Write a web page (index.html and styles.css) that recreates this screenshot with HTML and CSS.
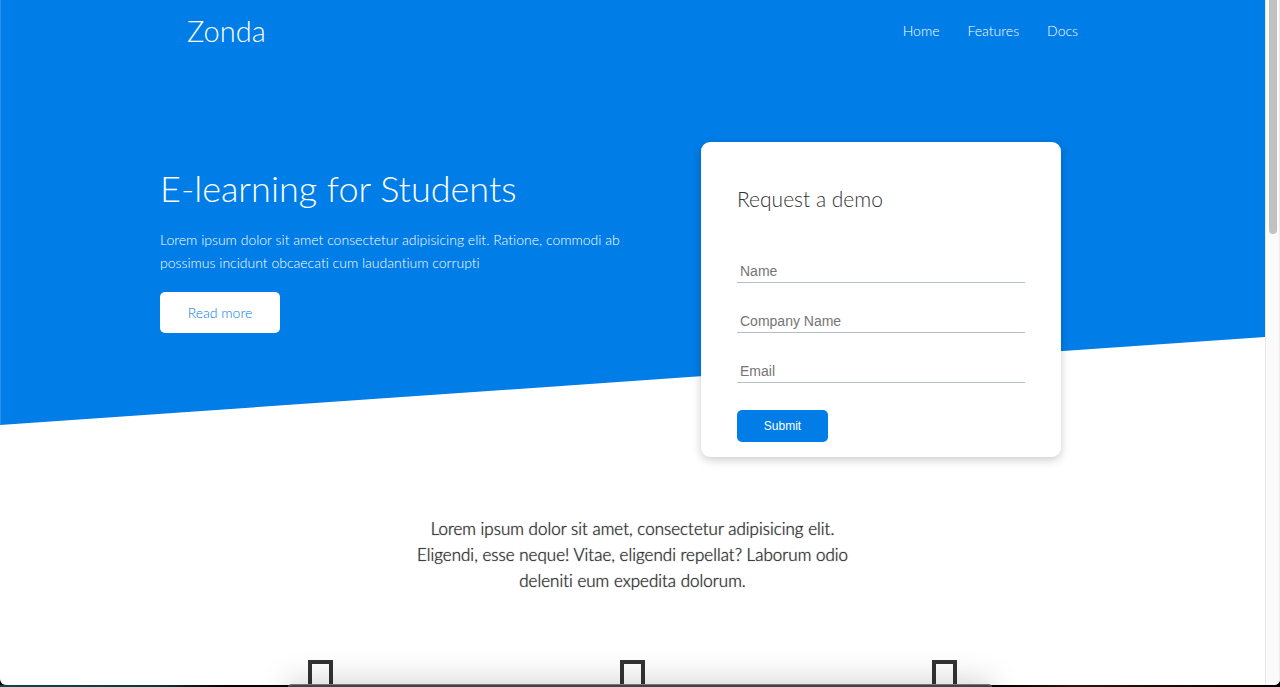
FILE: index.html
```html
<!DOCTYPE html>
<html lang="en">
<head>
  <meta charset="utf-8">
  <meta name="viewport" content="width=device-width, initial-scale=1">
  <title>Zonda</title>
  <link rel="stylesheet" href="styles.css">
</head>
<body>
  <div class="window">
    <div class="page">
      <header class="hero">
        <div class="navbar">
          <h1 class="logo">Zonda</h1>
          <nav>
            <ul class="nav-list">
              <li><a href="#">Home</a></li>
              <li><a href="#">Features</a></li>
              <li><a href="#">Docs</a></li>
            </ul>
          </nav>
        </div>
        <section class="showcase">
          <div class="showcase-text">
            <h2 class="headline">E-learning for Students</h2>
            <p class="lead">Lorem ipsum dolor sit amet consectetur adipisicing elit. Ratione, commodi ab possimus incidunt obcaecati cum laudantium corrupti</p>
            <a class="read-more" href="#">Read more</a>
          </div>
          <form class="card">
            <h2 class="card-title">Request a demo</h2>
            <input class="field" type="text" placeholder="Name" aria-label="Name">
            <input class="field" type="text" placeholder="Company Name" aria-label="Company Name">
            <input class="field" type="email" placeholder="Email" aria-label="Email">
            <button class="submit" type="submit">Submit</button>
          </form>
        </section>
      </header>
      <main class="stats">
        <h3 class="slogan">Lorem ipsum dolor sit amet, consectetur adipisicing elit. Eligendi, esse neque! Vitae, eligendi repellat? Laborum odio deleniti eum expedita dolorum.</h3>
        <div class="stats-grid">
          <span class="glyph"></span>
          <span class="glyph"></span>
          <span class="glyph"></span>
        </div>
      </main>
    </div>
    <div class="scrollbar"><div class="thumb"></div></div>
  </div>
  <div class="desktop"></div>
  <div class="dock"></div>
</body>
</html>
```
FILE: styles.css
```css
* {
  box-sizing: border-box;
  margin: 0;
  padding: 0;
}

body {
  display: flex;
  flex-direction: column;
  height: 100vh;
  overflow: hidden;
  background: #000;
  color: #333;
  font-family: Lato, sans-serif;
  font-size: 14px;
  font-weight: 300;
  font-variant-ligatures: none;
}

a {
  color: inherit;
  text-decoration: none;
}

.window {
  flex: 1;
  display: flex;
  min-height: 0;
  overflow: hidden;
  background: #fff;
  border-radius: 0 0 6px 6px;
}

.page {
  flex: 1;
  overflow: hidden;
}

/* Hero */
.hero {
  position: relative;
  color: #fff;
}

.hero::before {
  content: "";
  position: absolute;
  inset: 0 0 32px;
  background: #007de7;
  box-shadow: inset 1px 0 #2690eb;
  clip-path: polygon(0 0, 100% 0, 100% calc(100% - 88px), 0 100%);
}

.navbar {
  position: relative;
  display: flex;
  align-items: center;
  justify-content: space-between;
  max-width: 891px;
  height: 60px;
  margin: 0 auto;
}

.logo {
  font-size: 29px;
  font-weight: 300;
}

.nav-list {
  display: flex;
  gap: 28px;
  list-style: none;
}

.showcase {
  position: relative;
  display: grid;
  grid-template-columns: 1fr 448px;
  max-width: 945px;
  margin: 0 auto;
  padding-top: 82px;
}

.showcase-text {
  padding-top: 22px;
}

.headline {
  margin-bottom: 16px;
  font-size: 36px;
  font-weight: 300;
  line-height: 48px;
}

.lead {
  margin-bottom: 18px;
  line-height: 23px;
}

.read-more {
  display: inline-block;
  width: 120px;
  border-radius: 5px;
  background: #fff;
  color: #007de7;
  line-height: 41px;
  text-align: center;
}

.card {
  width: 360px;
  margin: 0 auto;
  padding: 40px 36px 15px;
  border-radius: 9px;
  background: #fff;
  box-shadow: 0 3px 10px rgba(0, 0, 0, 0.2);
  color: #333;
}

.card-title {
  margin-bottom: 44px;
  font-size: 21px;
  font-weight: 300;
  line-height: 34px;
}

.field {
  display: block;
  width: 100%;
  height: 23px;
  margin-bottom: 27px;
  padding: 0 3px;
  border: 0;
  border-bottom: 1px solid #b4becb;
  background: none;
  font-family: "Liberation Sans", Arial, sans-serif;
  font-size: 14px;
}

.field::placeholder {
  color: #757575;
}

.submit {
  display: block;
  width: 91px;
  height: 32px;
  border: 0;
  border-radius: 5px;
  background: #007de7;
  color: #fff;
  font-family: "Liberation Sans", Arial, sans-serif;
  font-size: 12px;
}

/* Stats */
.stats {
  padding-top: 59px;
}

.slogan {
  max-width: 450px;
  margin: 0 auto 66px;
  font-size: 17px;
  font-weight: 300;
  line-height: 26px;
  text-align: center;
  text-shadow: 0 0 1px #333;
}

.stats-grid {
  display: grid;
  grid-template-columns: repeat(3, 1fr);
  justify-items: center;
  max-width: 936px;
  margin: 0 auto;
}

.glyph {
  width: 25px;
  height: 44px;
  border: 4px solid #333;
}

/* Window frame */
.scrollbar {
  width: 15px;
  padding-left: 3px;
  border-left: 1px solid #e8e8e8;
  border-right: 1px solid #ededed;
  background: #fafafa;
}

.thumb {
  width: 8px;
  height: 34vh;
  border-radius: 0 0 4px 4px;
  background: #c1c1c1;
}

.desktop {
  height: 2px;
  background: linear-gradient(90deg, #034a4e, #063a3d 12%, #000 18%, #000 78%, #2a1808 84%, #000);
}

.dock {
  position: fixed;
  bottom: -30px;
  left: 288px;
  right: 288px;
  height: 33px;
  border-top: 1px solid #777;
  border-radius: 4px;
  background: #444045;
  box-shadow: 0 0 32px rgba(0, 0, 0, 0.22);
}
```
